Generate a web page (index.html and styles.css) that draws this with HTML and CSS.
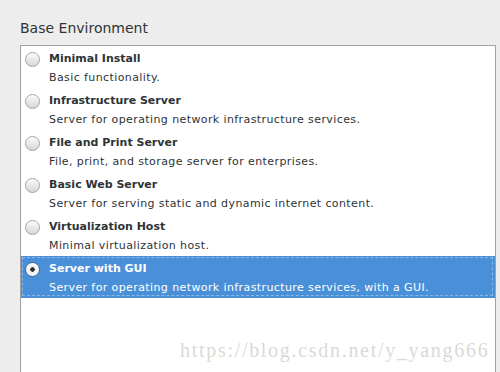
FILE: index.html
```html
<!DOCTYPE html>
<html lang="en">

  <head>
    <meta charset="UTF-8">
    <title>Base Environment</title>
    <meta name="viewport" content="width=device-width, initial-scale=1">
    <link rel="stylesheet" href="styles.css">
  </head>

  <body>
    <h2 class="section-title">Base Environment</h2>
    <div class="env-list" role="radiogroup" aria-label="Base Environment">
      <div class="env-row" role="radio" aria-checked="false">
        <span class="radio"></span>
        <div class="env-text">
          <div class="env-name">Minimal Install</div>
          <div class="env-desc">Basic functionality.</div>
        </div>
      </div>
      <div class="env-row" role="radio" aria-checked="false">
        <span class="radio"></span>
        <div class="env-text">
          <div class="env-name">Infrastructure Server</div>
          <div class="env-desc">Server for operating network infrastructure services.</div>
        </div>
      </div>
      <div class="env-row" role="radio" aria-checked="false">
        <span class="radio"></span>
        <div class="env-text">
          <div class="env-name">File and Print Server</div>
          <div class="env-desc">File, print, and storage server for enterprises.</div>
        </div>
      </div>
      <div class="env-row" role="radio" aria-checked="false">
        <span class="radio"></span>
        <div class="env-text">
          <div class="env-name">Basic Web Server</div>
          <div class="env-desc">Server for serving static and dynamic internet content.</div>
        </div>
      </div>
      <div class="env-row" role="radio" aria-checked="false">
        <span class="radio"></span>
        <div class="env-text">
          <div class="env-name">Virtualization Host</div>
          <div class="env-desc">Minimal virtualization host.</div>
        </div>
      </div>
      <div class="env-row selected" role="radio" aria-checked="true">
        <span class="radio"></span>
        <div class="env-text">
          <div class="env-name">Server with GUI</div>
          <div class="env-desc">Server for operating network infrastructure services, with a GUI.</div>
        </div>
      </div>
    </div>
    <div class="watermark" aria-hidden="true">https://blog.csdn.net/y_yang666</div>
  </body>
</html>
```

FILE: styles.css
```css
html, body {
  height: 100%;
}

body {
  margin: 0;
  overflow: hidden;
  background: #ededed;
  color: #2e3436;
  font-family: "DejaVu Sans", "Noto Sans", sans-serif;
  font-size: 11px;
}

.section-title {
  margin: 0;
  padding: 20px 0 0 20px;
  height: 25px;
  font-size: 14px;
  line-height: 17px;
  font-weight: normal;
}

.env-list {
  margin-left: 20px;
  width: 474px;
  height: 400px;
  background: #fff;
  border: 1px solid #a1a1a1;
}

.env-row {
  display: flex;
  align-items: flex-start;
  height: 42px;
  box-sizing: border-box;
  padding: 3px 0 0 4px;
  position: relative;
}

.radio {
  flex: none;
  width: 13px;
  height: 13px;
  margin: 3px 9px 0 0;
  border: 1px solid #a3a3a3;
  border-radius: 50%;
  background: linear-gradient(#fbfbfb, #d6d6d6);
  box-shadow: inset 0 1px 0 #fff;
}

.env-text {
  line-height: 19px;
}

.env-name {
  font-weight: bold;
}

.env-desc {
  letter-spacing: .4px;
}

.selected {
  background: #4a90d9;
  color: #fff;
}

.selected::after {
  content: "";
  position: absolute;
  inset: 1px 2px 2px 1px;
  border: 1px dashed rgba(255, 255, 255, .35);
}

.selected .radio {
  border-color: #3f6e9e;
  background: radial-gradient(circle, #2e3436 0 2px, #f4f4f4 2.5px);
}

.watermark {
  position: absolute;
  left: 180px;
  top: 339px;
  font-family: "Liberation Serif", "DejaVu Serif", serif;
  font-size: 20px;
  letter-spacing: 1.7px;
  color: #dadad6;
}
```
